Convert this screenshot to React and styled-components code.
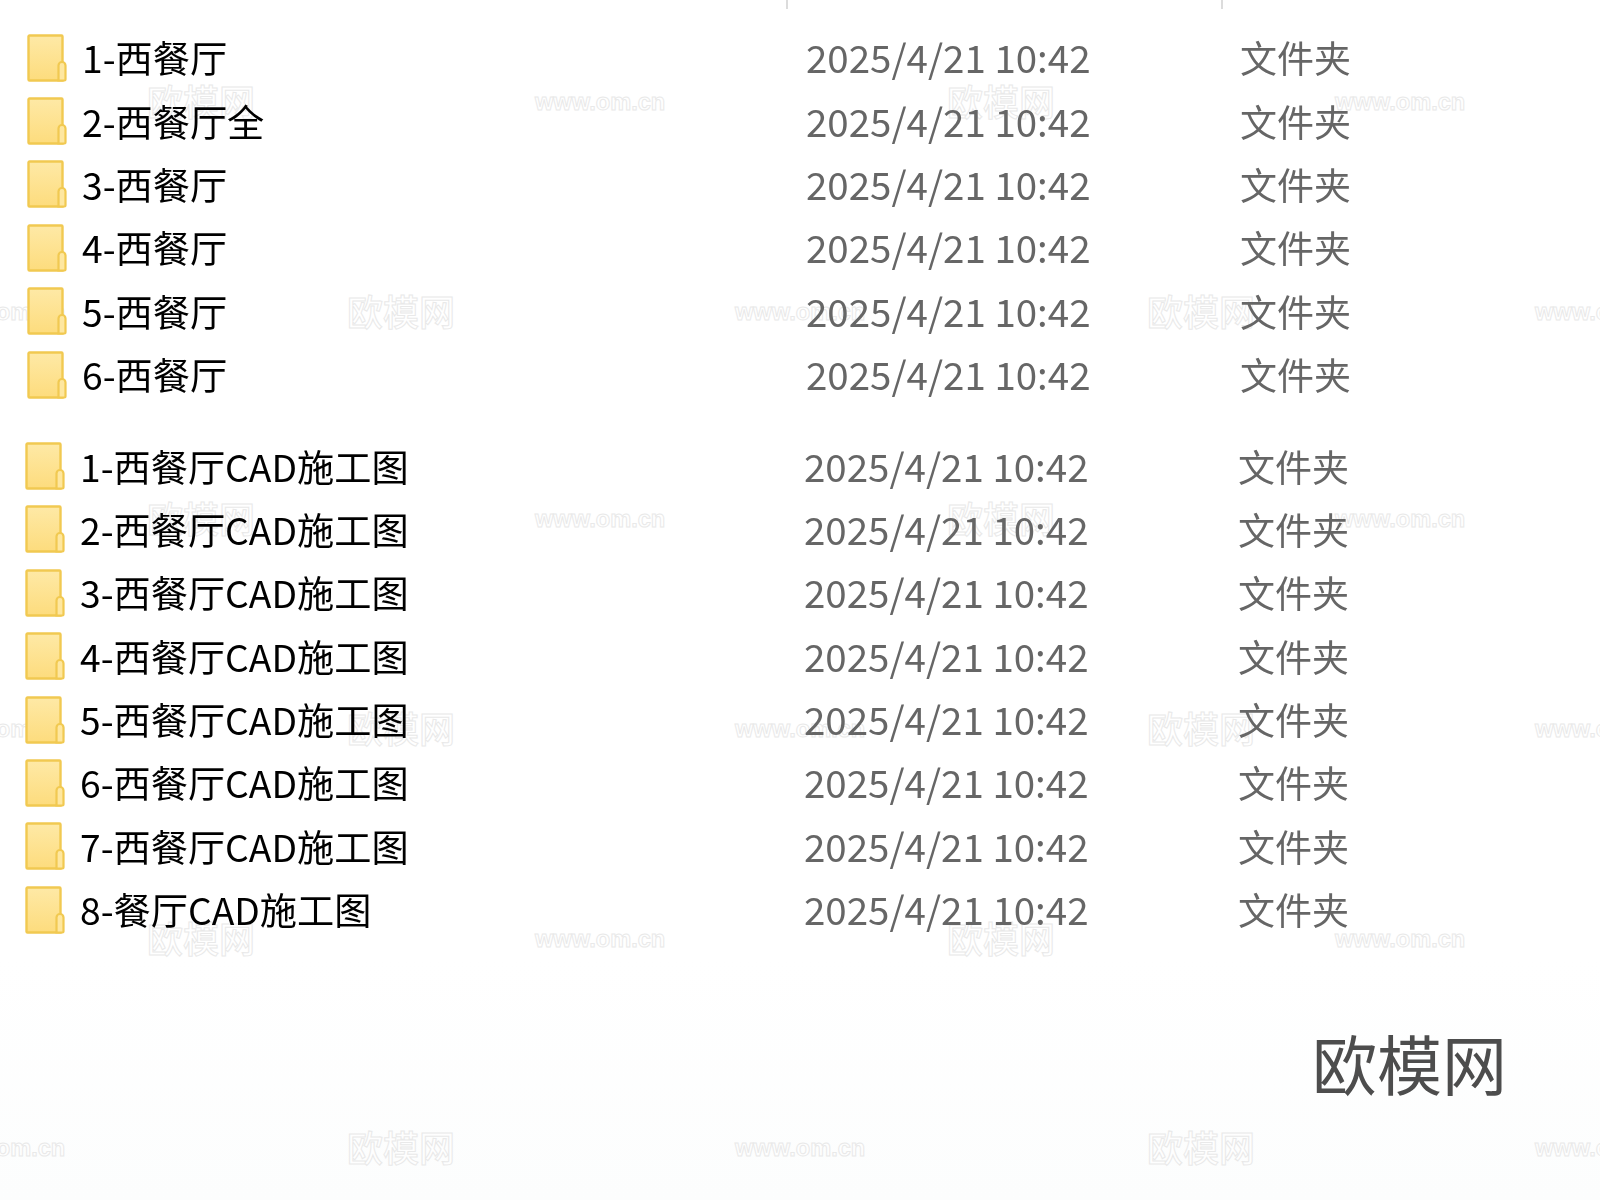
import React from 'react';
import styled, {createGlobalStyle} from 'styled-components';

const FONT = '"Noto Sans CJK SC", "Noto Sans", sans-serif';

const GlobalStyle = createGlobalStyle`
  html, body {
    margin: 0;
    padding: 0;
    background: #fff;
  }
`;

const Page = styled.div`
  position: relative;
  width: 1600px;
  height: 1200px;
  overflow: hidden;
  background: linear-gradient(#ffffff 80%, #fcfdfd 100%);
  font-family: ${FONT};
`;

const Header = styled.div`
  height: 26px;
  display: flex;
  align-items: flex-start;
  padding-left: 786px;
  gap: 433px;
`;

const HeaderDivider = styled.div`
  width: 2px;
  height: 9px;
  background: #dcdcdc;
`;

const FileList = styled.div`
  position: relative;
  z-index: 1;
  margin-left: ${p => p.$left}px;
  margin-bottom: ${p => p.$gap}px;
`;

const Row = styled.div`
  display: grid;
  grid-template-columns: 55px 724px 434px auto;
  align-items: center;
  height: 63.4px;
`;

const Name = styled.div`
  font-size: 37.2px;
  line-height: 44px;
  padding-bottom: 1px;
  color: #000;
  white-space: nowrap;
  filter: blur(0.4px);
`;

const Modified = styled.div`
  font-size: 38.5px;
  line-height: 44px;
  padding-bottom: 3px;
  color: #666;
  white-space: nowrap;
  filter: blur(0.4px);
`;

const Kind = styled(Modified)`
  font-size: 37px;
  padding-bottom: 1px;
`;

const Brand = styled.div`
  display: flex;
  justify-content: flex-end;
  padding: 0 93px 0 0;
  margin-top: 82px;
  font-size: 65px;
  line-height: 78px;
  color: #4d4d4d;
`;

const WatermarkLayer = styled.div`
  position: absolute;
  inset: 0;
`;

const Watermark = styled.span.attrs(p => ({
  style: {left: p.$x, top: p.$y},
}))`
  position: absolute;
  transform: translateY(-50%);
  margin-top: ${p => (p.$latin ? 0 : -3)}px;
  white-space: nowrap;
  color: rgba(255, 255, 255, 0.8);
  -webkit-text-stroke: 1px #e9e9e9;
  font-family: ${p => (p.$latin ? '"Liberation Sans", sans-serif' : FONT)};
  font-weight: ${p => (p.$latin ? 700 : 500)};
  font-size: ${p => (p.$latin ? 23.6 : 36)}px;
  line-height: 1;
`;

function FolderIcon() {
  return (
    <svg width="40" height="48" viewBox="0 0 40 48">
      <defs>
        <linearGradient id="folderFill" x1="0" y1="0" x2="0" y2="1">
          <stop offset="0" stopColor="#fee9a6" />
          <stop offset="1" stopColor="#fddc7d" />
        </linearGradient>
      </defs>
      <path
        d="M2.5 1.5H34.5a1 1 0 0 1 1 1V46.5H2.5a1 1 0 0 1-1-1V2.5a1 1 0 0 1 1-1Z"
        fill="url(#folderFill)"
        stroke="#f1c951"
        strokeWidth="2.4"
      />
      <path
        d="M31.5 46.5V31.5a3.5 3.5 0 0 1 7 0V45.5a1 1 0 0 1-1 1Z"
        fill="#fee7a0"
        stroke="#f1c951"
        strokeWidth="2.2"
      />
    </svg>
  );
}

const FIRST = ['1-西餐厅', '2-西餐厅全', '3-西餐厅', '4-西餐厅', '5-西餐厅', '6-西餐厅'];
const SECOND = [
  '1-西餐厅CAD施工图',
  '2-西餐厅CAD施工图',
  '3-西餐厅CAD施工图',
  '4-西餐厅CAD施工图',
  '5-西餐厅CAD施工图',
  '6-西餐厅CAD施工图',
  '7-西餐厅CAD施工图',
  '8-餐厅CAD施工图',
];

// the watermark tiles alternate between two offsets, band by band
const BANDS = [
  {y: 103, even: true},
  {y: 313, even: false},
  {y: 520, even: true},
  {y: 730, even: false},
  {y: 940, even: true},
  {y: 1149, even: false},
];

function watermarks() {
  const out = [];
  BANDS.forEach(({y, even}) => {
    const shift = even ? 147 : 347;
    [0, 800].forEach(dx => {
      out.push({x: shift + dx, y, text: '欧模网', latin: false});
      out.push({x: shift + dx + 388, y, text: 'www.om.cn', latin: true});
    });
    if (!even) out.push({x: -65, y, text: 'www.om.cn', latin: true});
  });
  return out;
}

function FileGroup({names, left, gap}) {
  return (
    <FileList $left={left} $gap={gap}>
      {names.map(name => (
        <Row key={name}>
          <FolderIcon />
          <Name>{name}</Name>
          <Modified>2025/4/21 10:42</Modified>
          <Kind>文件夹</Kind>
        </Row>
      ))}
    </FileList>
  );
}

export default function App() {
  return (
    <Page>
      <GlobalStyle />
      <WatermarkLayer>
        {watermarks().map(m => (
          <Watermark key={`${m.x}-${m.y}`} $x={m.x} $y={m.y} $latin={m.latin}>
            {m.text}
          </Watermark>
        ))}
      </WatermarkLayer>
      <Header>
        <HeaderDivider />
        <HeaderDivider />
      </Header>
      <FileGroup names={FIRST} left={27} gap={28} />
      <FileGroup names={SECOND} left={25} gap={0} />
      <Brand>欧模网</Brand>
    </Page>
  );
}
